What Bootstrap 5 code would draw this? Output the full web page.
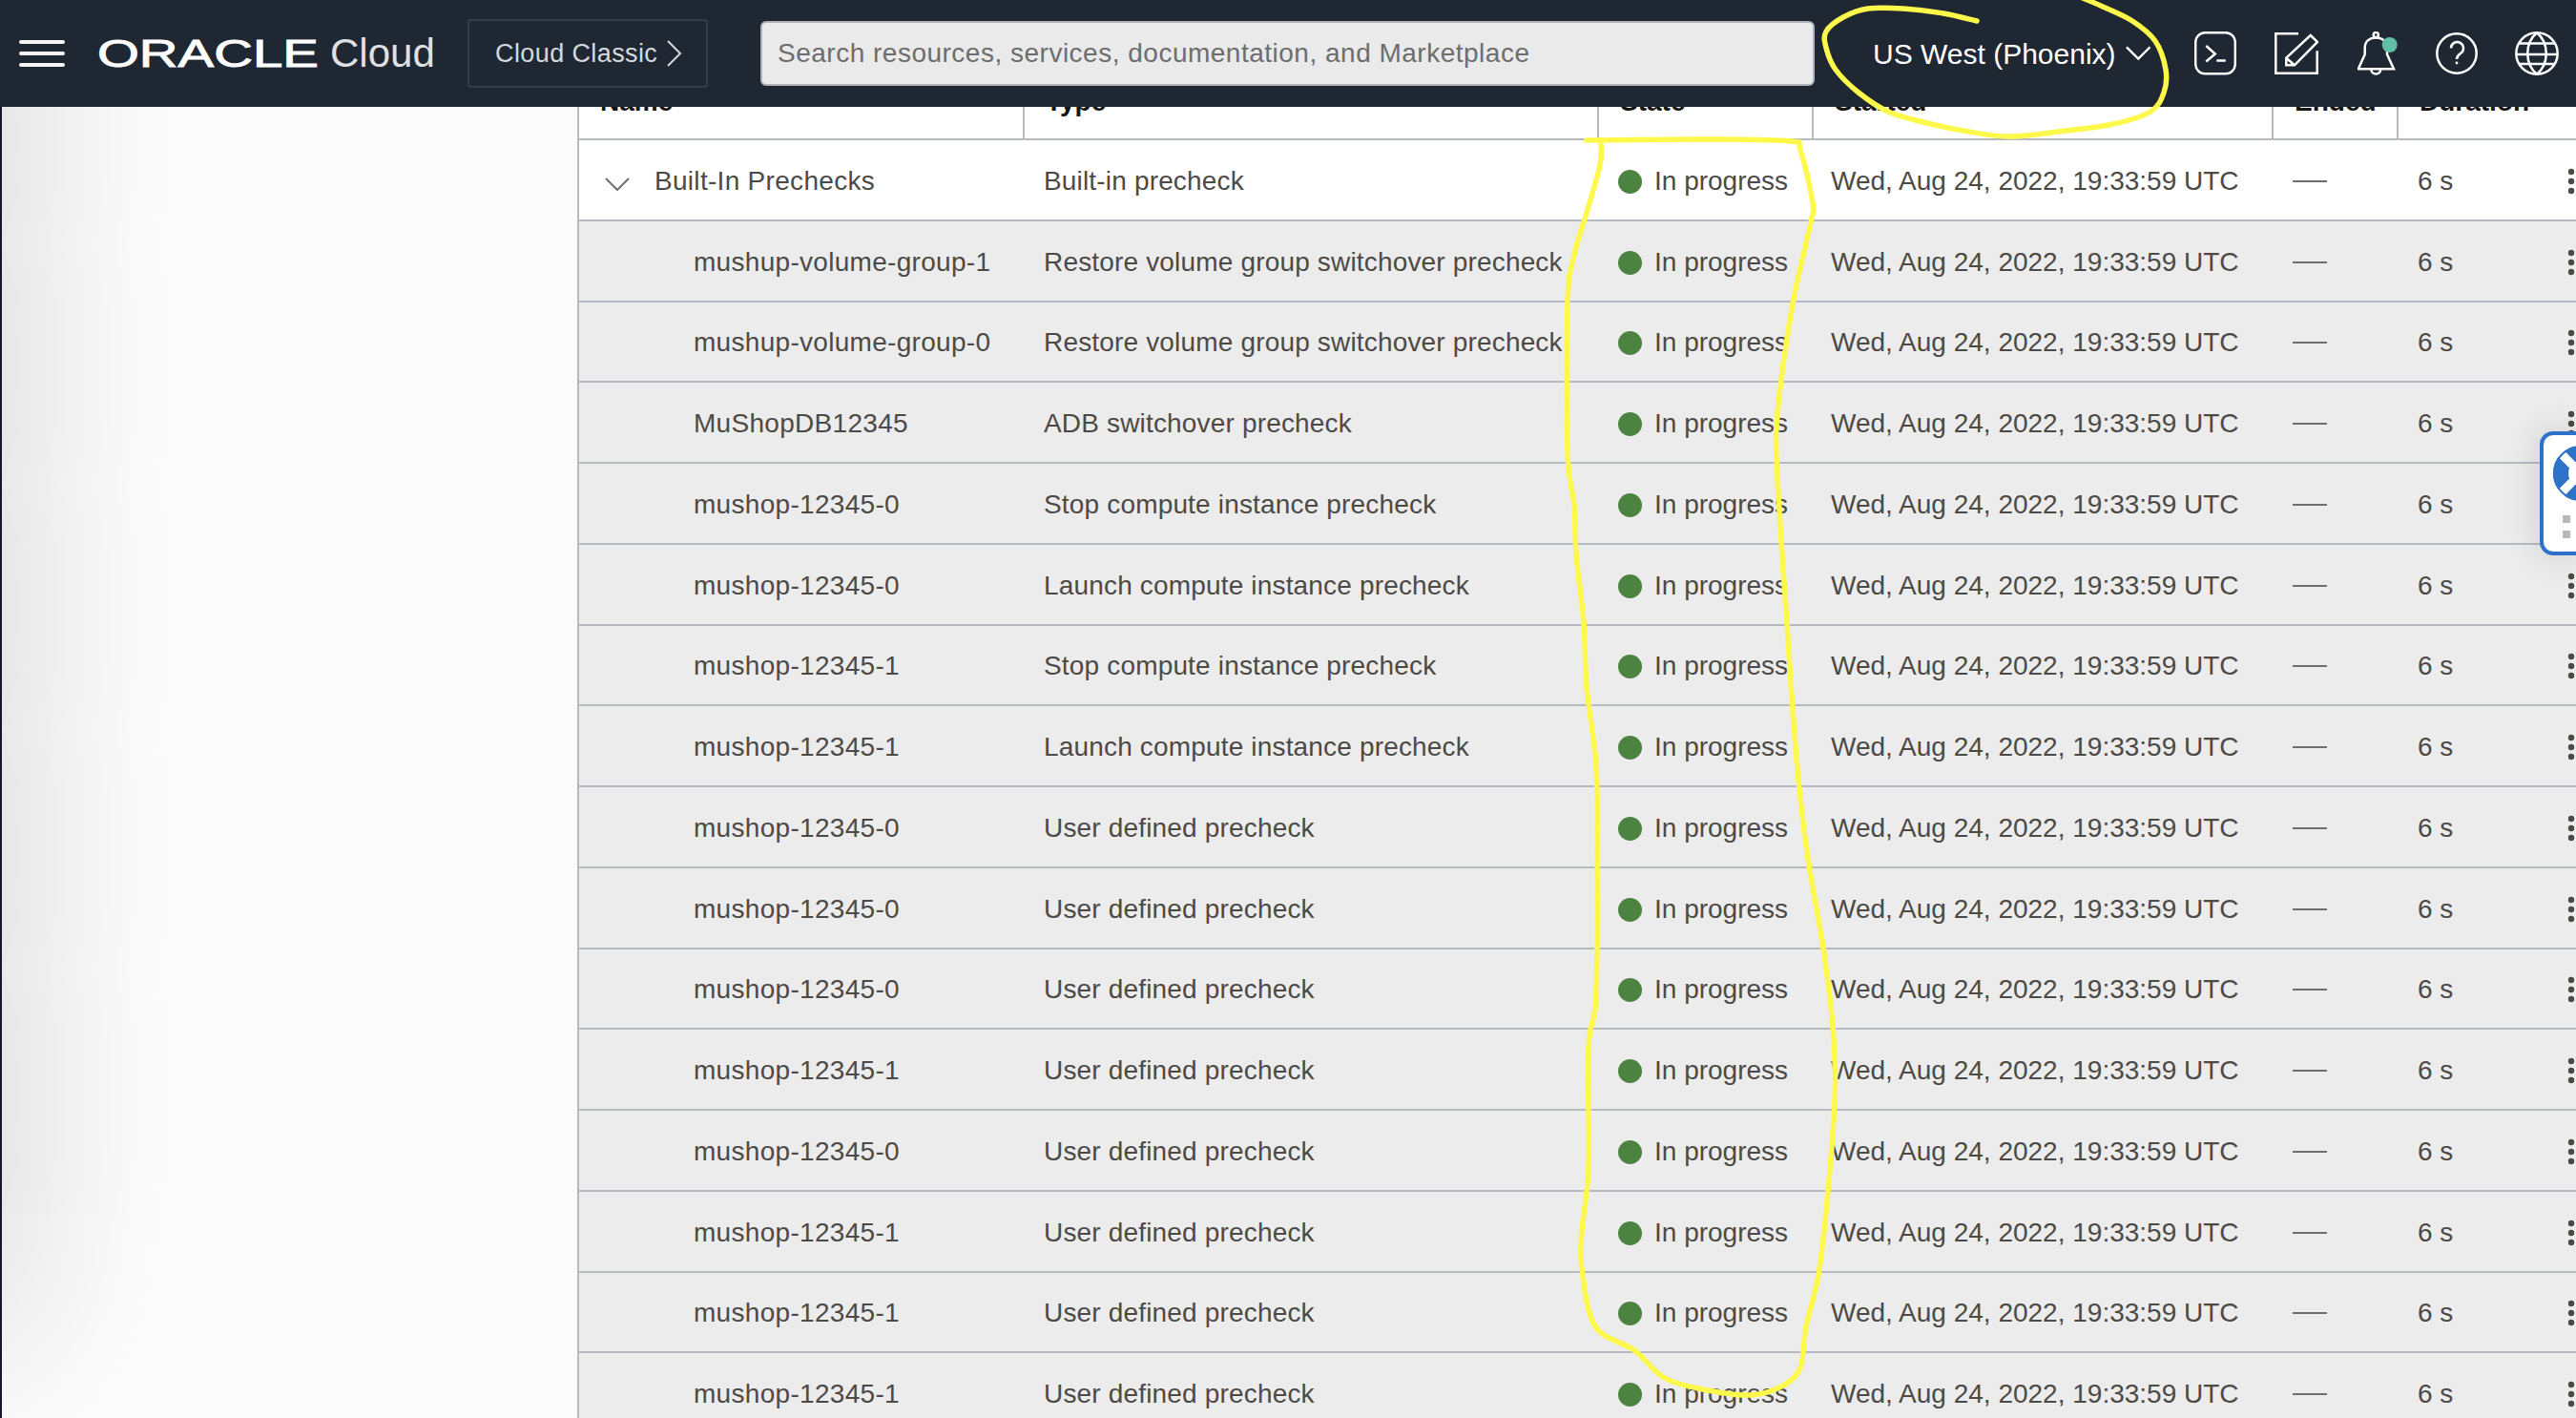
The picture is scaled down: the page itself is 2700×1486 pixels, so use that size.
<!DOCTYPE html><html lang="en">
<head>
<meta charset="UTF-8">
<meta name="viewport" content="width=device-width, initial-scale=1.0">
<title>Oracle Cloud - Work requests</title>
<link href="https://cdn.jsdelivr.net/npm/bootstrap@5.3.2/dist/css/bootstrap.min.css" rel="stylesheet">
<style>
    html, body { height: 100%; }
    body { margin: 0; overflow: hidden; background: #fcfcfc; font-family: "Liberation Sans", Arial, sans-serif; font-size: 28px; color: #4d4a46; position: relative; border-left: 2px solid #141b28; }
    .oci-bar { height: 112px; padding: 0 0 0 20px; background: #1f2733; flex-wrap: nowrap; justify-content: flex-start; }
    .oci-burger { width: 48px; display: flex; flex-direction: column; gap: 8px; }
    .oci-burger span { height: 4px; border-radius: 2px; background: #f4f4f4; }
    .oci-logo { width: 230px; margin-left: 34px; height: 40px; line-height: 40px; color: #fff; font-size: 40px; white-space: nowrap; -webkit-text-stroke: .9px #fff; }
    .oci-logo span { display: inline-block; transform: scaleX(1.41); transform-origin: left center; }
    .oci-cloud { width: 108px; margin-left: 14px; color: #dfe1e4; font-size: 42px; line-height: 44px; }
    .oci-classic { width: 252px; height: 72px; margin-left: 36px; padding: 0 0 0 27px; border: 2px solid #343d4a; border-radius: 4px; color: #d5d8dc; font-size: 27px; letter-spacing: .4px; gap: 10px; }
    .oci-search { width: 1105px; height: 68px; margin-left: 55px; padding: 0 16px; background: #eaeaea; border: 2px solid #aeb3ba; border-radius: 6px; color: #6d6d6d; font-size: 28px; letter-spacing: .5px; }
    .oci-region { margin-left: 61px; width: 291px; color: #fff; font-size: 30px; gap: 10px; white-space: nowrap; }
    .oci-icons svg { display: block; fill: none; stroke: #fff; stroke-width: 2.5; }
    .oci-i1 { margin-left: 46px; }
    .oci-i2 { margin-left: 40px; }
    .oci-i3 { margin-left: 41px; }
    .oci-i4 { margin-left: 40px; }
    .oci-i5 { margin-left: 39px; }
    .oci-shade { position: absolute; left: -300px; top: -100px; width: 300px; height: 1500px; box-shadow: 0 0 200px rgba(0, 0, 0, .2); }
    .oci-main { margin-left: 603px; padding-top: 60px; }
    .oci-table { --bs-table-bg: transparent; --bs-table-color: #4d4a46; width: 2096px; table-layout: fixed; border-collapse: separate; border-spacing: 0; margin: 0; background: #fff; border-left: 2px solid #b6b9bf; }
    .oci-table th { height: 87px; padding: 0 0 17px 22px; vertical-align: bottom; font-weight: 700; color: #161513; border-bottom: 2px solid #b6b9bf; border-right: 2px solid #b6b9bf; }
    .oci-table th:nth-child(6), .oci-table th:nth-child(7) { border-right: 0; }
    .oci-table td { height: 84.75px; padding: 3px 0 0 20px; vertical-align: middle; white-space: nowrap; border-bottom: 2px solid #b6b9bf; }
    .oci-table td:nth-child(1) { letter-spacing: .3px; }
    .oci-table td:nth-child(2) { letter-spacing: .17px; }
    .oci-table td:nth-child(4) { padding-left: 18px; }
    .oci-sub td { background: #ececec; }
    .oci-sub td:first-child { padding-left: 120px; }
    .oci-group td:first-child { padding-left: 27px; }
    .oci-chev { margin-right: 26px; vertical-align: -1px; }
    .oci-dot { display: inline-block; width: 25px; height: 25px; border-radius: 50%; background: #4c8341; margin-right: 13px; vertical-align: -4px; }
    .oci-dash { display: block; width: 36px; height: 2px; background: #6f6f6f; }
    .oci-table td.oci-more { padding-left: 10px; }
    .oci-kebab { display: block; }
    .oci-help { position: absolute; left: 2660px; top: 452px; width: 38px; height: 130px; overflow: hidden; background: #fff; border: 4px solid #2d72c8; border-right: 0; border-radius: 14px 0 0 14px; box-shadow: 0 0 36px rgba(0, 0, 0, .14); z-index: 5; }
    .oci-help svg { position: absolute; left: 10px; top: 11px; }
    .oci-sq { position: absolute; left: 20px; width: 8px; height: 8px; background: #b6b9bf; }
    .oci-ink { position: absolute; left: -2px; top: 0; z-index: 2000; fill: none; stroke: #fdf94a; stroke-width: 5.5; stroke-linecap: round; stroke-linejoin: round; pointer-events: none; }
</style>
</head>
<body>

<nav class="navbar fixed-top oci-bar">
    <div class="oci-burger"><span></span><span></span><span></span></div>
    <div class="oci-logo"><span>ORACLE</span></div>
    <div class="oci-cloud">Cloud</div>
    <div class="oci-classic d-flex align-items-center">Cloud Classic
        <svg width="16" height="28" viewBox="0 0 16 28" fill="none" stroke="#d5d8dc" stroke-width="2"><path d="M1 1l13 13L1 27"/></svg>
    </div>
    <div class="oci-search d-flex align-items-center">Search resources, services, documentation, and Marketplace</div>
    <div class="oci-region d-flex align-items-center">US West (Phoenix)
        <svg width="28" height="16" viewBox="0 0 28 16" fill="none" stroke="#fff" stroke-width="2.5"><path d="M1 1l13 13L27 1"/></svg>
    </div>
    <div class="oci-icons d-flex align-items-center">
        <svg class="oci-i1" width="44" height="46" viewBox="0 0 44 46"><rect x="1.2" y="1.2" width="41.6" height="43" rx="10"/><path d="M12.3 15l9.5 8.5-9.5 8M23.3 30.5h9.5"/></svg>
        <svg class="oci-i2" width="46" height="44" viewBox="0 0 46 44"><path d="M25 1.3H1.3v41.4H44.7V19.3M37.7 3L45 10 21 34.3h-8.7v-7.6zM12.3 26.7l8.7 7.6"/></svg>
        <svg class="oci-i3" width="42" height="46" viewBox="0 0 42 46"><circle cx="19.3" cy="3.6" r="2.6"/><path d="M.8 39.3L7.7 24v-7C7.7 10 13 6.5 19.3 6.5S31 10 31 17v7l7 15.3zM14.3 39.5a5 5 0 0 0 10 0"/><circle cx="33.7" cy="14" r="8" fill="#5fc0a6" stroke="none"/></svg>
        <svg class="oci-i4" width="44" height="44" viewBox="0 0 44 44"><circle cx="22" cy="22" r="20.7"/><path d="M16 16.5a6.5 6.5 0 1 1 10 5.5c-2.5 1.7-4 3-4 6"/><circle cx="22" cy="32" r="1.4" fill="#fff" stroke="none"/></svg>
        <svg class="oci-i5" width="46" height="46" viewBox="0 0 46 46"><circle cx="23" cy="23" r="21.7"/><path d="M23 1.3C10 12 10 34 23 44.7 36 34 36 12 23 1.3zM4.5 12.5h37M1.5 24h43M4.5 34h37"/></svg>
    </div>
</nav>

<div class="oci-shade"></div>

<div class="oci-main">
    <table class="table oci-table">
        <colgroup><col style="width:467px"><col style="width:602px"><col style="width:225px"><col style="width:482px"><col style="width:131px"><col style="width:167px"><col style="width:20px"></colgroup>
        <thead><tr><th>Name</th><th>Type</th><th>State</th><th>Started</th><th>Ended</th><th>Duration</th><th></th></tr></thead>
        <tbody id="stepsTable"></tbody>
    </table>
</div>

<div class="oci-help">
    <svg width="58" height="58" viewBox="0 0 58 58">
        <circle cx="29" cy="29" r="21" fill="none" stroke="#2d72c8" stroke-width="16"/>
        <path d="M8 8l14 14M50 8L36 22M8 50l14-14M50 50L36 36" stroke="#fff" stroke-width="9" fill="none"/>
        <circle cx="29" cy="29" r="28" fill="none" stroke="#2d72c8" stroke-width="2"/>
    </svg>
    <span class="oci-sq" style="top:84px"></span>
    <span class="oci-sq" style="top:100px"></span>
</div>

<svg class="oci-ink" width="2700" height="1486" viewBox="0 0 2700 1486">
    <path id="inkRegion"/>
    <path id="inkState"/>
</svg>

<script src="https://cdn.jsdelivr.net/npm/bootstrap@5.3.2/dist/js/bootstrap.bundle.min.js"></script>
<script>
    const UDP = "User defined precheck";
    const RVG = "Restore volume group switchover precheck";
    const steps = [
        ["mushup-volume-group-1", RVG],
        ["mushup-volume-group-0", RVG],
        ["MuShopDB12345", "ADB switchover precheck"],
        ["mushop-12345-0", "Stop compute instance precheck"],
        ["mushop-12345-0", "Launch compute instance precheck"],
        ["mushop-12345-1", "Stop compute instance precheck"],
        ["mushop-12345-1", "Launch compute instance precheck"],
        ["mushop-12345-0", UDP],
        ["mushop-12345-0", UDP],
        ["mushop-12345-0", UDP],
        ["mushop-12345-1", UDP],
        ["mushop-12345-0", UDP],
        ["mushop-12345-1", UDP],
        ["mushop-12345-1", UDP],
        ["mushop-12345-1", UDP]
    ];

    const kebab = `<svg class="oci-kebab" width="8" height="28" viewBox="0 0 8 28" fill="#4d4a46"><circle cx="4" cy="4" r="3.2"/><circle cx="4" cy="14" r="3.2"/><circle cx="4" cy="24" r="3.2"/></svg>`;

    function rowCells(type) {
        return `<td>${type}</td>
            <td><span class="oci-dot"></span>In progress</td>
            <td>Wed, Aug 24, 2022, 19:33:59 UTC</td>
            <td><span class="oci-dash"></span></td>
            <td>6 s</td>
            <td class="oci-more">${kebab}</td>`;
    }

    document.getElementById("stepsTable").innerHTML =
        `<tr class="oci-group"><td><svg class="oci-chev" width="26" height="14" viewBox="0 0 26 14" fill="none" stroke="#6f6f6f" stroke-width="2"><path d="M1 1l12 12L25 1"/></svg>Built-In Prechecks</td>${rowCells("Built-in precheck")}</tr>` +
        steps.map(s => `<tr class="oci-sub"><td>${s[0]}</td>${rowCells(s[1])}</tr>`).join("");

    // hand drawn marker lines, smoothed through the traced points
    function smooth(p) {
        let d = `M${p[0][0]} ${p[0][1]}`;
        for (let i = 0; i < p.length - 1; i++) {
            const a = p[i - 1] || p[i], b = p[i], c = p[i + 1], e = p[i + 2] || c;
            d += `C${b[0] + (c[0] - a[0]) / 6} ${b[1] + (c[1] - a[1]) / 6} ${c[0] - (e[0] - b[0]) / 6} ${c[1] - (e[1] - b[1]) / 6} ${c[0]} ${c[1]}`;
        }
        return d;
    }

    document.getElementById("inkRegion").setAttribute("d", smooth([
        [2072, 22], [2037, 14], [1995, 9], [1958, 9], [1932, 18], [1914, 33], [1914, 50], [1924, 73], [1948, 97], [1979, 117], [2016, 128],
        [2058, 137], [2105, 143], [2157, 138], [2215, 130], [2254, 117], [2268, 97], [2270, 73], [2259, 43], [2235, 22], [2204, 7], [2183, -2]
    ]));
    document.getElementById("inkState").setAttribute("d", smooth([
        [1678, 150], [1677, 173], [1663, 223], [1650, 267], [1643, 317], [1643, 473], [1650, 530], [1652, 580], [1660, 653], [1663, 720], [1673, 803],
        [1674, 900], [1674, 990], [1672, 1057], [1665, 1097], [1665, 1223], [1658, 1290], [1658, 1330], [1672, 1390], [1713, 1415], [1743, 1443], [1780, 1455],
        [1833, 1462], [1867, 1453], [1887, 1433], [1893, 1390], [1908, 1323], [1922, 1173], [1922, 1090], [1912, 1000], [1895, 900], [1885, 817], [1878, 730],
        [1873, 653], [1867, 567], [1862, 480], [1862, 447], [1867, 397], [1880, 313], [1898, 233], [1900, 213], [1887, 157], [1877, 148], [1800, 146], [1663, 147]
    ]));
</script>
</body>
</html>
